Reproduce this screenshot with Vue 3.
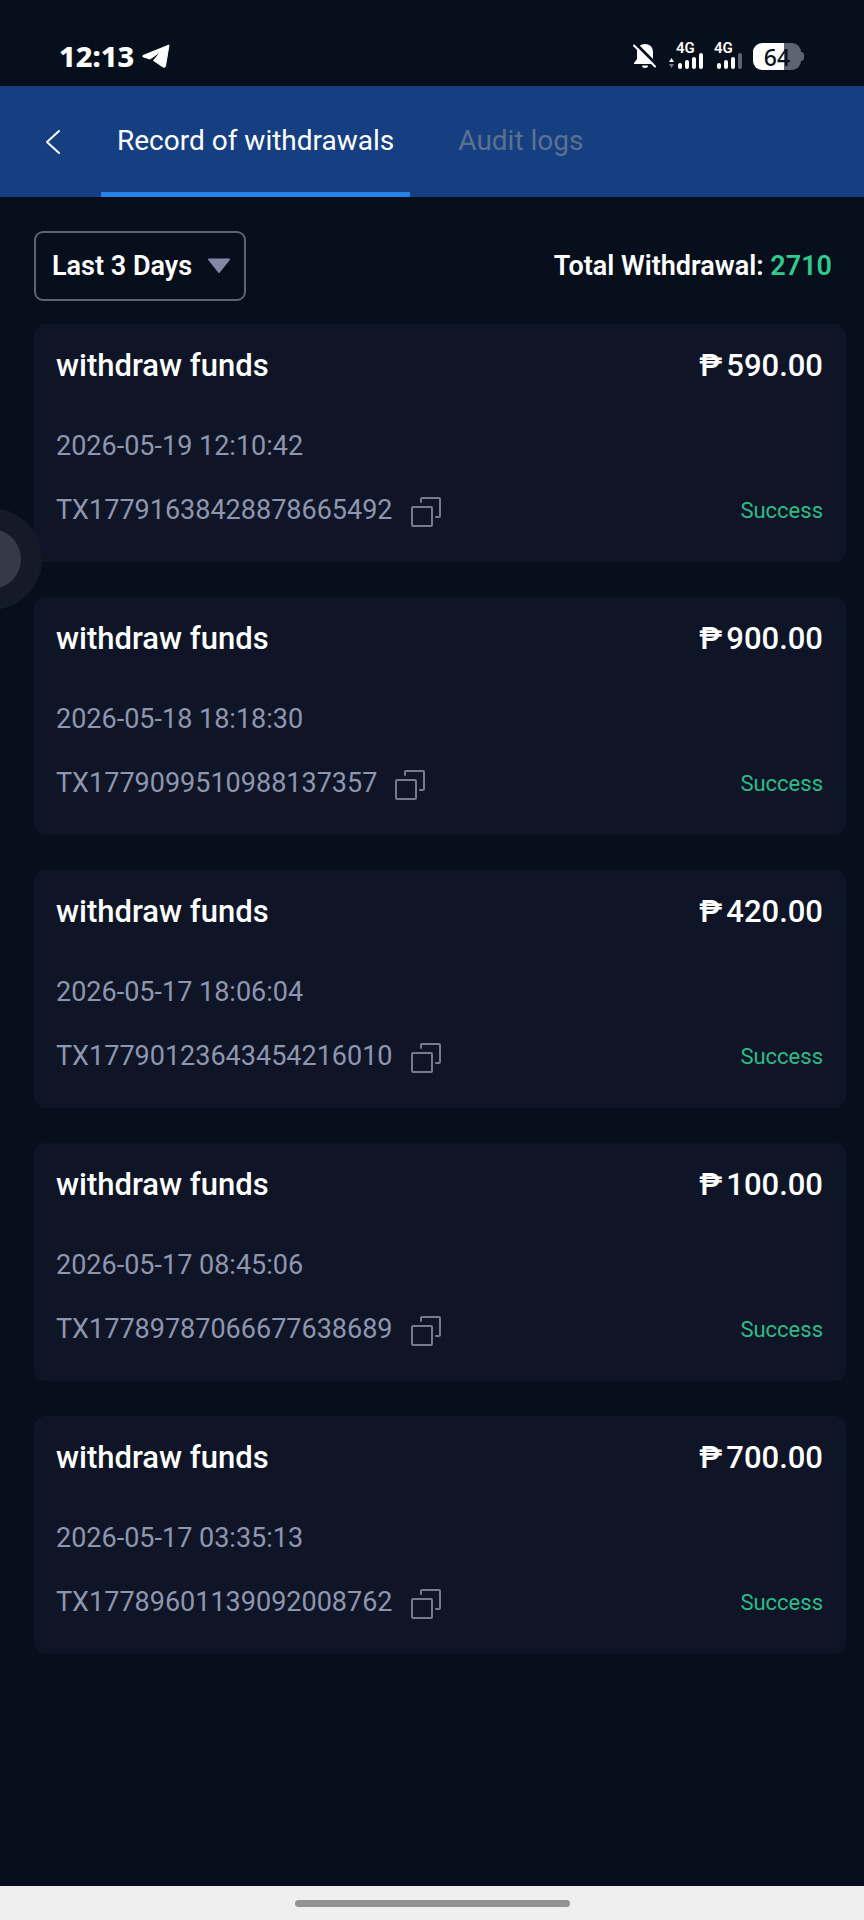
<script setup>
import { ref } from 'vue'

const period = ref('Last 3 Days')
const total = 2710
const records = [
  { amount: '590.00', time: '2026-05-19 12:10:42', tx: 'TX17791638428878665492' },
  { amount: '900.00', time: '2026-05-18 18:18:30', tx: 'TX1779099510988137357' },
  { amount: '420.00', time: '2026-05-17 18:06:04', tx: 'TX17790123643454216010' },
  { amount: '100.00', time: '2026-05-17 08:45:06', tx: 'TX17789787066677638689' },
  { amount: '700.00', time: '2026-05-17 03:35:13', tx: 'TX17789601139092008762' },
]
</script>

<template>
  <div class="screen">
    <div class="status">
      <div class="status-left">
        <span class="clock">12:13</span>
        <svg class="plane" viewBox="0 0 28 24" aria-hidden="true">
          <path d="M27 1 L1 11.5 Q0 12.5 1.5 13 L8 15 L19 7.500 L11.500 16.500 L21 23 Q23 24 23.500 22 Z" fill="#fff" stroke="#fff" stroke-width="1" stroke-linejoin="round" />
        </svg>
      </div>
      <div class="status-right">
        <svg class="bell" viewBox="0 0 24 26" aria-hidden="true">
          <path d="M12 1 C6.500 1 4 5 4 9 V16 L1 20 V21 H23 V20 L20 16 V9 C20 5 17.500 1 12 1 Z" fill="#fff" />
          <path d="M9 22.500 H15 Q15 25 12 25 Q9 25 9 22.500 Z" fill="#fff" />
          <path d="M3 1 L24 22" stroke="#070e1c" stroke-width="3" />
          <path d="M1 2.500 L22 23.500" stroke="#fff" stroke-width="2" stroke-linecap="round" />
        </svg>
        <div class="signal">
          <span class="net">4G</span>
          <svg viewBox="0 0 34 17" class="bars" aria-hidden="true">
            <path d="M0 9 L2.500 5 L5 9 Z" fill="#fff" />
            <path d="M0 11 H5 L2.500 15 Z" fill="#777c88" />
            <path d="M11 12 V14 M18 9 V14 M25 6 V14 M32 2 V14" stroke="#fff" stroke-width="4" stroke-linecap="round" />
          </svg>
        </div>
        <div class="signal second">
          <span class="net">4G</span>
          <svg viewBox="0 0 28 17" class="bars" aria-hidden="true">
            <path d="M5 12 V14 M12 9 V14 M19 6 V14" stroke="#fff" stroke-width="4" stroke-linecap="round" />
            <path d="M26 2 V14" stroke="#5e6370" stroke-width="4" stroke-linecap="round" />
          </svg>
        </div>
        <div class="battery"><span class="level">64</span></div>
      </div>
    </div>

    <header class="nav">
      <button class="back" type="button" aria-label="Back">
        <svg viewBox="0 0 16 26" aria-hidden="true">
          <path d="M14 2 L2 13 L14 24" fill="none" stroke="#fff" stroke-width="2" stroke-linecap="round" stroke-linejoin="round" />
        </svg>
      </button>
      <button class="tab active" type="button">Record of withdrawals</button>
      <button class="tab" type="button">Audit logs</button>
    </header>

    <main class="content">
      <div class="filters">
        <div class="picker">
          <select v-model="period" aria-label="Period">
            <option>Last 3 Days</option>
          </select>
          <svg class="caret" viewBox="0 0 24 16" aria-hidden="true">
            <path d="M2 1.500 H22 L12 14 Z" fill="#8189a7" stroke="#8189a7" stroke-width="2" stroke-linejoin="round" />
          </svg>
        </div>
        <p class="total">Total Withdrawal: <span>{{ total }}</span></p>
      </div>

      <ul class="list">
        <li v-for="r in records" :key="r.tx" class="card">
          <div class="row head">
            <span>withdraw funds</span>
            <span class="amount"><span>₱</span><span>{{ r.amount }}</span></span>
          </div>
          <div class="time">{{ r.time }}</div>
          <div class="row foot">
            <span class="tx">{{ r.tx }}
              <button class="copy" type="button" aria-label="Copy transaction number">
                <svg viewBox="0 0 30 30" aria-hidden="true">
                  <g fill="none" stroke="#757b8c" stroke-width="2">
                    <rect x="1" y="10" width="20" height="19" rx="1" />
                    <path d="M10 5 V2 Q10 1 11 1 H28 Q29 1 29 2 V19 Q29 20 28 20 H25" stroke-linecap="round" />
                  </g>
                </svg>
              </button>
            </span>
            <span class="state">Success</span>
          </div>
        </li>
      </ul>
    </main>

    <button class="assist" type="button" aria-label="Assistive menu"><span></span></button>
    <div class="home"><span></span></div>
  </div>
</template>

<style>
body {
  background: #070e1c;
}
</style>

<style scoped>
.screen {
  position: relative;
  display: flex;
  flex-direction: column;
  min-height: 100vh;
  overflow: hidden;
  background: #070e1c;
  color: #fff;
  font-family: Roboto, sans-serif;
}
button {
  padding: 0;
  border: 0;
  background: none;
  color: inherit;
  font: inherit;
}
svg {
  display: block;
}
.status {
  display: flex;
  justify-content: space-between;
  align-items: center;
  height: 60px;
  padding: 26px 63px 0 59px;
}
.status-left,
.status-right {
  display: flex;
  align-items: center;
}
.status-left {
  gap: 8px;
}
.clock {
  font: 800 29px/32px "Noto Sans", sans-serif;
}
.plane {
  width: 28px;
  height: 24px;
}
.bell {
  width: 24px;
  height: 26px;
  margin-right: 12px;
}
.signal {
  display: flex;
  flex-direction: column;
  width: 34px;
  margin-right: 11px;
}
.signal.second {
  width: 28px;
}
.net {
  padding-left: 7px;
  font: 600 15px/10px Roboto, sans-serif;
}
.second .net {
  padding-left: 0;
}
.bars {
  width: 100%;
  height: 17px;
}
.battery {
  position: relative;
  width: 48px;
  height: 27px;
  border-radius: 9px;
  background: linear-gradient(90deg, #fff 64%, #5e6370 64%);
  color: #070e1c;
  text-align: center;
}
.battery::after {
  content: "";
  position: absolute;
  top: 9px;
  right: -3px;
  width: 3px;
  height: 9px;
  border-radius: 0 3px 3px 0;
  background: #5e6370;
}
.level {
  font: 500 23px/28px "Noto Sans", sans-serif;
}
.nav {
  display: flex;
  height: 111px;
  background: #163f82;
}
.back {
  display: flex;
  align-items: center;
  justify-content: center;
  width: 101px;
  padding-left: 5px;
  box-sizing: border-box;
}
.back svg {
  width: 16px;
  height: 26px;
}
.tab {
  padding: 3px 16px 0;
  margin-right: 32px;
  border-bottom: 5px solid transparent;
  color: #5c718f;
  font-size: 28px;
}
.tab.active {
  border-bottom-color: #2683e3;
  color: #fff;
}
.content {
  flex: 1;
  padding: 34px 18px 34px 34px;
}
.filters {
  display: flex;
  justify-content: space-between;
  align-items: center;
  margin-bottom: 23px;
  padding-right: 14px;
  font-size: 27px;
  font-weight: 600;
}
.picker {
  position: relative;
}
select {
  display: block;
  appearance: none;
  height: 70px;
  padding: 0 51px 0 16px;
  border: 2px solid #5e6473;
  border-radius: 9px;
  background: transparent;
  color: inherit;
  font: inherit;
}
.caret {
  position: absolute;
  top: 27px;
  right: 15px;
  width: 24px;
  height: 16px;
  pointer-events: none;
}
.total {
  margin: 0;
}
.total span {
  color: #2fca8d;
}
.list {
  display: flex;
  flex-direction: column;
  gap: 35px;
  margin: 0;
  padding: 0;
  list-style: none;
}
.card {
  padding: 21px 23px 32px 22px;
  border-radius: 12px;
  background: #0f1526;
}
.row {
  display: flex;
  justify-content: space-between;
  align-items: center;
}
.head {
  height: 40px;
  font-size: 31px;
  font-weight: 500;
}
.amount {
  display: flex;
  gap: 4px;
}
.time {
  margin: 42px 0 24px;
  color: #8e96ae;
  font-size: 27px;
  line-height: 39px;
}
.foot {
  height: 40px;
}
.tx {
  display: flex;
  align-items: center;
  gap: 18px;
  color: #8e96ae;
  font-size: 27px;
}
.copy {
  padding-top: 4px;
}
.copy svg {
  width: 30px;
  height: 30px;
}
.state {
  color: #2dbb87;
  font-size: 22px;
}
.assist {
  position: absolute;
  top: 508px;
  left: -60px;
  display: grid;
  place-items: center;
  width: 102px;
  height: 102px;
  border-radius: 50%;
  background: #151a28;
}
.assist span {
  width: 60px;
  height: 60px;
  border-radius: 50%;
  background: #343a47;
}
.home {
  display: flex;
  justify-content: center;
  align-items: center;
  height: 34px;
  background: #efeff0;
}
.home span {
  width: 275px;
  height: 7px;
  border-radius: 4px;
  background: #929292;
}
</style>
